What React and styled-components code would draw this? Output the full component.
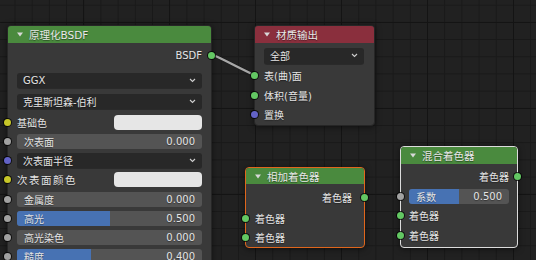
import React from 'react';
import styled, { createGlobalStyle } from 'styled-components';

const GlobalStyle = createGlobalStyle`
    html, body {
        margin: 0;
        padding: 0;
        background: #1f1f1f;
        overflow: hidden;
    }
    * {
        box-sizing: border-box;
    }
`;

const Canvas = styled.div`
    position: relative;
    width: 536px;
    height: 260px;
    overflow: hidden;
    font-family: "DejaVu Sans", "Noto Sans CJK SC", sans-serif;
    font-size: 10px;
    color: #e4e4e4;
    background-color: #212121;
    background-image:
        linear-gradient(to right, #141414 1px, transparent 1px),
        linear-gradient(to bottom, #141414 1px, transparent 1px),
        linear-gradient(to right, #191919 1px, transparent 1px),
        linear-gradient(to bottom, #191919 1px, transparent 1px);
    background-size: 86px 86px, 86px 86px, 17.2px 17.2px, 17.2px 17.2px;
    background-position: 83px 0, 0 22px, 14.5px 0, 0 4.7px;
`;

const Links = styled.svg`
    position: absolute;
    left: 0;
    top: 0;
    pointer-events: none;
`;

const Node = styled.div`
    position: absolute;
    left: ${({ $x }) => $x}px;
    top: ${({ $y }) => $y}px;
    width: ${({ $w }) => $w}px;
    height: ${({ $h }) => $h}px;
    background: #393939;
    border-radius: 4px;
    border: 1px solid ${({ $outline }) => $outline || '#262626'};
    box-shadow: 0 1px 6px rgba(0, 0, 0, 0.55);
    display: flex;
    flex-direction: column;
`;

const Header = styled.div`
    height: ${({ $h }) => $h || 17}px;
    background: ${({ $color }) => $color};
    border-radius: 3px 3px 0 0;
    display: flex;
    align-items: center;
    gap: 6px;
    padding-left: 9px;
    font-size: 10.5px;
    color: #e8e8e8;
    text-shadow: 0 1px 1px rgba(0, 0, 0, 0.45);
    flex-shrink: 0;
`;

const Body = styled.div`
    display: flex;
    flex-direction: column;
    padding: 0 ${({ $pr }) => $pr}px 0 ${({ $pl }) => $pl}px;
`;

const Row = styled.div`
    position: relative;
    height: ${({ $h }) => $h || 15}px;
    margin-top: ${({ $mt }) => $mt || 0}px;
    display: flex;
    align-items: center;
    justify-content: ${({ $out }) => ($out ? 'flex-end' : 'space-between')};
    text-shadow: 0 1px 1px rgba(0, 0, 0, 0.4);
    flex-shrink: 0;
`;

const Label = styled.span`
    letter-spacing: ${({ $wide }) => ($wide ? '1.5px' : '0')};
    font-size: ${({ $wide }) => ($wide ? '10.5px' : 'inherit')};
    white-space: nowrap;
`;

const Socket = styled.span`
    position: absolute;
    top: 50%;
    width: 7px;
    height: 7px;
    margin-top: -3.5px;
    border-radius: 50%;
    background: ${({ $color }) => $color};
    box-shadow: 0 0 0 1px rgba(0, 0, 0, 0.75);
    ${({ $out, $edge }) => ($out ? `right: ${-$edge - 4}px;` : `left: ${-$edge - 4}px;`)}
`;

const Dropdown = styled.div`
    flex: 1;
    height: 100%;
    background: #282828;
    border-radius: 3px;
    display: flex;
    align-items: center;
    justify-content: space-between;
    padding: 0 6px 0 6px;
    box-shadow: 0 1px 0 rgba(0, 0, 0, 0.25);
`;

const Swatch = styled.div`
    width: ${({ $w }) => $w}px;
    height: 100%;
    background: #e6e6e6;
    border-radius: 4px;
`;

const Slider = styled.div`
    position: relative;
    flex: 1;
    height: 100%;
    background: #545454;
    border-radius: 3px;
    overflow: hidden;
    display: flex;
    align-items: center;
    justify-content: space-between;
    padding: 0 7px;
`;

const Fill = styled.div`
    position: absolute;
    left: 0;
    top: 0;
    bottom: 0;
    background: #4772b3;
`;

const SliderText = styled.span`
    position: relative;
    white-space: nowrap;
`;

const SOCK = {
    shader: '#63c763',
    color: '#c7c729',
    value: '#a1a1a1',
    vector: '#6363c7',
};

const Chevron = () => (
    <svg width="7" height="5" viewBox="0 0 7 5">
        <polyline points="1,1 3.5,3.5 6,1" fill="none" stroke="#cfcfcf" strokeWidth="1.1" />
    </svg>
);

const Arrow = () => (
    <svg width="6" height="5" viewBox="0 0 6 5">
        <polygon points="0,0.5 6,0.5 3,4.5" fill="#d8d8d8" />
    </svg>
);

const SliderRow = ({ mt, label, value, fill, edge }) => (
    <Row $mt={mt}>
        <Socket $color={SOCK.value} $edge={edge} />
        <Slider>
            {fill > 0 && <Fill style={{ width: `${fill * 100}%` }} />}
            <SliderText>{label}</SliderText>
            <SliderText>{value}</SliderText>
        </Slider>
    </Row>
);

const InRow = ({ mt, label, color, edge, wide, children }) => (
    <Row $mt={mt}>
        <Socket $color={color} $edge={edge} />
        <Label $wide={wide}>{label}</Label>
        {children}
    </Row>
);

const OutRow = ({ mt, label, edge }) => (
    <Row $mt={mt} $out>
        <Label>{label}</Label>
        <Socket $out $color={SOCK.shader} $edge={edge} />
    </Row>
);

export default function App() {
    return (
        <>
            <GlobalStyle />
            <Canvas>
                <Links width="536" height="260">
                    <path d="M211 54 C 220 57.5, 245 71, 254.5 75" fill="none" stroke="#1a1a1a" strokeWidth="4" strokeOpacity="0.5" />
                    <path d="M211 54 C 220 57.5, 245 71, 254.5 75" fill="none" stroke="#a8a8a8" strokeWidth="2.4" />
                </Links>

                <Node $x={7} $y={25} $w={205} $h={250}>
                    <Header $color="#4a8a3e"><Arrow />原理化BSDF</Header>
                    <Body $pl={9} $pr={9}>
                        <OutRow mt={4.5} label="BSDF" edge={9} />
                        <Row $mt={10.5}><Dropdown>GGX<Chevron /></Dropdown></Row>
                        <Row $mt={6}><Dropdown>克里斯坦森-伯利<Chevron /></Dropdown></Row>
                        <InRow mt={6} label="基础色" color={SOCK.color} edge={9}>
                            <Swatch $w={88} />
                        </InRow>
                        <SliderRow mt={4.3} label="次表面" value="0.000" fill={0} edge={9} />
                        <Row $mt={4.1}>
                            <Socket $color={SOCK.vector} $edge={9} />
                            <Dropdown>次表面半径<Chevron /></Dropdown>
                        </Row>
                        <InRow mt={4.1} label="次表面颜色" color={SOCK.color} edge={9} wide>
                            <Swatch $w={88} />
                        </InRow>
                        <SliderRow mt={4.1} label="金属度" value="0.000" fill={0} edge={9} />
                        <SliderRow mt={4.1} label="高光" value="0.500" fill={0.5} edge={9} />
                        <SliderRow mt={4.1} label="高光染色" value="0.000" fill={0} edge={9} />
                        <SliderRow mt={4.1} label="糙度" value="0.400" fill={0.4} edge={9} />
                    </Body>
                </Node>

                <Node $x={254} $y={25} $w={121} $h={101}>
                    <Header $color="#8a2f3d"><Arrow />材质输出</Header>
                    <Body $pl={9} $pr={10}>
                        <Row $mt={4.5} $h={16}><Dropdown>全部<Chevron /></Dropdown></Row>
                        <InRow mt={4.8} label="表(曲)面" color={SOCK.shader} edge={9} />
                        <InRow mt={4.3} label="体积(音量)" color={SOCK.shader} edge={9} />
                        <InRow mt={4} label="置换" color={SOCK.vector} edge={9} />
                    </Body>
                </Node>

                <Node $x={245} $y={167} $w={120} $h={81} $outline="#e0661c">
                    <Header $color="#4a8a3e" $h={16}><Arrow />相加着色器</Header>
                    <Body $pl={9} $pr={12}>
                        <OutRow mt={5.5} label="着色器" edge={12} />
                        <InRow mt={6.3} label="着色器" color={SOCK.shader} edge={9} />
                        <InRow mt={4.4} label="着色器" color={SOCK.shader} edge={9} />
                    </Body>
                </Node>

                <Node $x={400} $y={146} $w={118} $h={102} $outline="#dcdcdc">
                    <Header $color="#4a8a3e"><Arrow />混合着色器</Header>
                    <Body $pl={8} $pr={8}>
                        <OutRow mt={5} label="着色器" edge={8} />
                        <SliderRow mt={4.5} label="系数" value="0.500" fill={0.5} edge={8} />
                        <InRow mt={4.8} label="着色器" color={SOCK.shader} edge={8} />
                        <InRow mt={4.4} label="着色器" color={SOCK.shader} edge={8} />
                    </Body>
                </Node>
            </Canvas>
        </>
    );
}
